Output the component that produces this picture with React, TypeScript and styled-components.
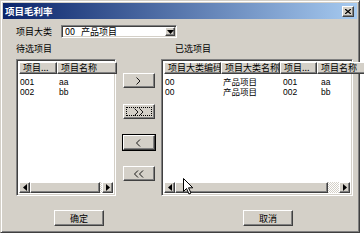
import React from "react";
import styled, { createGlobalStyle, css } from "styled-components";

const GlobalStyle = createGlobalStyle`
	html, body {
		margin: 0;
		padding: 0;
		background: #ffffff;
	}
	body {
		font-family: "Noto Sans CJK SC", "Liberation Sans", sans-serif;
		font-size: 9px;
		color: #000000;
	}
`;

const raised = css`
	border-top: 1px solid #ffffff;
	border-left: 1px solid #ffffff;
	border-right: 1px solid #404040;
	border-bottom: 1px solid #404040;
	box-shadow: inset -1px -1px 0 #808080;
`;

const sunken = css`
	border-top: 1px solid #808080;
	border-left: 1px solid #808080;
	border-right: 1px solid #ffffff;
	border-bottom: 1px solid #ffffff;
	box-shadow: inset 1px 1px 0 #404040, inset -1px -1px 0 #d4d0c8;
`;

const Window = styled.div`
	position: relative;
	box-sizing: border-box;
	width: 360px;
	height: 233px;
	background: #d4d0c8;
	padding: 2px;
	border-top: 1px solid #d4d0c8;
	border-left: 1px solid #d4d0c8;
	border-right: 1px solid #404040;
	border-bottom: 1px solid #404040;
	box-shadow: inset 1px 1px 0 #ffffff, inset -1px -1px 0 #808080;
	display: flex;
	flex-direction: column;
`;

const TitleBar = styled.div`
	height: 16px;
	background: linear-gradient(to right, #0a246a, #a6caf0);
	display: flex;
	align-items: center;
	justify-content: space-between;
	padding: 0 3px 0 2px;
`;

const Title = styled.span`
	color: #ffffff;
	font-weight: bold;
	font-size: 9.5px;
	line-height: 16px;
`;

const CloseButton = styled.div`
	${raised};
	box-sizing: border-box;
	width: 12px;
	height: 11px;
	background: #d4d0c8;
	display: flex;
	align-items: center;
	justify-content: center;
`;

const Body = styled.div`
	flex: 1;
	display: flex;
	flex-direction: column;
	padding: 6px 0 0 13px;
`;

const FieldRow = styled.div`
	display: flex;
	align-items: center;
	height: 13px;
	gap: 9px;
`;

const Label = styled.span<{ $indent?: number }>`
	line-height: 12px;
	white-space: nowrap;
	padding-left: ${(p) => p.$indent ?? 0}px;
`;

const Combo = styled.div`
	${sunken};
	box-sizing: border-box;
	width: 116px;
	height: 13px;
	background: #ffffff;
	display: flex;
	align-items: center;
	justify-content: space-between;
	padding: 0 1px 0 3px;
`;

const ComboText = styled.span`
	line-height: 11px;
	word-spacing: 4px;
`;

const DropButton = styled.div`
	${raised};
	box-sizing: border-box;
	width: 10px;
	height: 9px;
	background: #d4d0c8;
	display: flex;
	align-items: center;
	justify-content: center;
`;

const CaptionRow = styled.div`
	display: flex;
	margin-top: 4px;
	height: 13px;
	align-items: center;
`;

const Columns = styled.div`
	display: flex;
	margin-top: 4px;
	height: 137px;
`;

const ListView = styled.div<{ $width: number }>`
	${sunken};
	box-sizing: border-box;
	width: ${(p) => p.$width}px;
	height: 100%;
	background: #ffffff;
	display: flex;
	flex-direction: column;
	padding: 2px;
`;

const HeaderRow = styled.div`
	display: flex;
	height: 12px;
	flex-shrink: 0;
`;

const HeaderCell = styled.div<{ $w: number }>`
	${raised};
	box-sizing: border-box;
	width: ${(p) => p.$w}px;
	flex-shrink: 0;
	background: #d4d0c8;
	padding-left: 3px;
	line-height: 10px;
	white-space: nowrap;
	overflow: hidden;
`;

const Rows = styled.div`
	flex: 1;
	padding-top: 3px;
`;

const Row = styled.div`
	display: flex;
	height: 10px;
`;

const Cell = styled.div<{ $w: number }>`
	width: ${(p) => p.$w}px;
	flex-shrink: 0;
	padding-left: 1px;
	line-height: 10px;
	font-family: "Liberation Sans", "Noto Sans CJK SC", sans-serif;
	font-size: 8.5px;
	white-space: nowrap;
`;

const HScroll = styled.div`
	display: flex;
	height: 11px;
	flex-shrink: 0;
`;

const ScrollArrow = styled.div`
	${raised};
	box-sizing: border-box;
	width: 11px;
	height: 11px;
	background: #d4d0c8;
	display: flex;
	align-items: center;
	justify-content: center;
	flex-shrink: 0;
`;

const Thumb = styled.div<{ $w: number }>`
	${raised};
	box-sizing: border-box;
	width: ${(p) => p.$w}px;
	height: 11px;
	background: #d4d0c8;
	flex-shrink: 0;
`;

const Track = styled.div`
	flex: 1;
	background-color: #e8e6e2;
	background-image: repeating-conic-gradient(#ffffff 0 25%, #d4d0c8 0 50%);
	background-size: 2px 2px;
`;

const MoveColumn = styled.div`
	width: 45px;
	display: flex;
	flex-direction: column;
	align-items: center;
	padding-top: 14px;
	gap: 16px;
	box-sizing: border-box;
`;

const Button = styled.div<{ $variant?: "default" | "focus"; $w?: number; $h?: number }>`
	${raised};
	box-sizing: border-box;
	width: ${(p) => p.$w ?? 32}px;
	height: ${(p) => p.$h ?? 15}px;
	background: #d4d0c8;
	display: flex;
	align-items: center;
	justify-content: center;
	font-size: 9px;
	color: #000000;
	${(p) =>
		p.$variant === "default" &&
		css`
			outline: 1px solid #000000;
		`}
	${(p) =>
		p.$variant === "focus" &&
		css`
			&::after {
				content: "";
				position: absolute;
				inset: 2px;
				border: 1px dotted #000000;
			}
			position: relative;
		`}
`;

const Footer = styled.div`
	display: flex;
	margin-top: 14px;
	padding-left: 38px;
	gap: 139px;
	align-items: flex-start;
`;

const Cursor = styled.svg`
	position: absolute;
	left: 182px;
	top: 177px;
`;

const Arrow: React.FC<{ dir: "left" | "right" | "down" }> = ({ dir }) => {
	if (dir === "down")
		return (
			<svg width="7" height="4" viewBox="0 0 7 4">
				<path d="M0 0h7L3.5 4z" fill="#000" />
			</svg>
		);
	return (
		<svg width="4" height="7" viewBox="0 0 4 7">
			<path d={dir === "right" ? "M0 0v7L4 3.5z" : "M4 0v7L0 3.5z"} fill="#000" />
		</svg>
	);
};

const Chevrons: React.FC<{ dir: "left" | "right"; count: number }> = ({ dir, count }) => (
	<svg width={count === 1 ? 5 : 10} height="8" viewBox={`0 0 ${count === 1 ? 5 : 10} 8`}>
		{Array.from({ length: count }).map((_, i) => (
			<path
				key={i}
				d={
					dir === "right"
						? `M${i * 5 + 0.5} 0.5 L${i * 5 + 4} 4 L${i * 5 + 0.5} 7.5`
						: `M${i * 5 + 4} 0.5 L${i * 5 + 0.5} 4 L${i * 5 + 4} 7.5`
				}
				fill="none"
				stroke="#000"
				strokeWidth="0.9"
			/>
		))}
	</svg>
);

type Column = { title: string; width: number };

const ListBox: React.FC<{
	width: number;
	columns: Column[];
	rows: string[][];
	thumb: number;
}> = ({ width, columns, rows, thumb }) => (
	<ListView $width={width}>
		<HeaderRow>
			{columns.map((c) => (
				<HeaderCell key={c.title} $w={c.width}>
					{c.title}
				</HeaderCell>
			))}
		</HeaderRow>
		<Rows>
			{rows.map((r, i) => (
				<Row key={i}>
					{r.map((v, j) => (
						<Cell key={j} $w={columns[j].width}>
							{v}
						</Cell>
					))}
				</Row>
			))}
		</Rows>
		<HScroll>
			<ScrollArrow>
				<Arrow dir="left" />
			</ScrollArrow>
			<Thumb $w={thumb} />
			<Track />
			<ScrollArrow>
				<Arrow dir="right" />
			</ScrollArrow>
		</HScroll>
	</ListView>
);

const leftColumns: Column[] = [
	{ title: "项目...", width: 38 },
	{ title: "项目名称", width: 60 },
];

const rightColumns: Column[] = [
	{ title: "项目大类编码", width: 57 },
	{ title: "项目大类名称", width: 59 },
	{ title: "项目...", width: 37 },
	{ title: "项目名称", width: 50 },
];

export default function App() {
	return (
		<>
			<GlobalStyle />
			<Window>
				<TitleBar>
					<Title>项目毛利率</Title>
					<CloseButton>
						<svg width="6" height="5" viewBox="0 0 6 5">
							<path d="M0 0L6 5M6 0L0 5" stroke="#000" strokeWidth="1.3" />
						</svg>
					</CloseButton>
				</TitleBar>
				<Body>
					<FieldRow>
						<Label>项目大类</Label>
						<Combo>
							<ComboText>00 产品项目</ComboText>
							<DropButton>
								<Arrow dir="down" />
							</DropButton>
						</Combo>
					</FieldRow>
					<CaptionRow>
						<Label>待选项目</Label>
						<Label $indent={123}>已选项目</Label>
					</CaptionRow>
					<Columns>
						<ListBox
							width={100}
							columns={leftColumns}
							rows={[
								["001", "aa"],
								["002", "bb"],
							]}
							thumb={70}
						/>
						<MoveColumn>
							<Button>
								<Chevrons dir="right" count={1} />
							</Button>
							<Button $variant="focus">
								<Chevrons dir="right" count={2} />
							</Button>
							<Button $variant="default">
								<Chevrons dir="left" count={1} />
							</Button>
							<Button>
								<Chevrons dir="left" count={2} />
							</Button>
						</MoveColumn>
						<ListBox
							width={192}
							columns={rightColumns}
							rows={[
								["00", "产品项目", "001", "aa"],
								["00", "产品项目", "002", "bb"],
							]}
							thumb={153}
						/>
					</Columns>
					<Footer>
						<Button $w={50} $h={16}>
							确定
						</Button>
						<Button $w={50} $h={16}>
							取消
						</Button>
					</Footer>
				</Body>
				<Cursor width="12" height="17" viewBox="0 0 12 17">
					<path
						d="M0.5 0.5V13.5L3.5 10.5L6 16L8 15L5.5 9.8H9.8Z"
						fill="#ffffff"
						stroke="#000"
						strokeWidth="1"
					/>
				</Cursor>
			</Window>
		</>
	);
}
